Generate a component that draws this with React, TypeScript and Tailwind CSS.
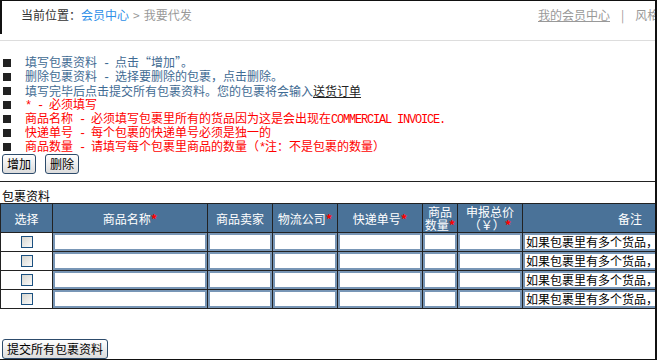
import React from "react";

const F = { fontFamily: '"Noto Sans CJK SC", "Noto Sans", sans-serif' };

function H({ children }: { children: React.ReactNode }) {
  return (
    <span className="whitespace-pre tracking-[-1.2px]" style={{ fontFamily: '"Liberation Mono", monospace' }}>
      {children}
    </span>
  );
}

function Li({ red, children }: { red?: boolean; children: React.ReactNode }) {
  return (
    <div className="flex items-center h-[14px] shrink-0">
      <span className="ml-[3px] w-[8px] h-[8px] bg-[#222] shrink-0" />
      <span className={`ml-[14px] whitespace-nowrap text-[12px] leading-[14px] ${red ? "text-[#ff0000]" : "text-[#3f6b93]"}`}>
        {children}
      </span>
    </div>
  );
}

function Btn({ children }: { children: React.ReactNode }) {
  return (
    <button className="h-[20px] px-[4px] text-[12px] leading-[16px] text-black border border-[#2d4b6b] rounded-[3px] bg-gradient-to-b from-white to-[#dcdcdc] whitespace-nowrap">
      {children}
    </button>
  );
}

const Star = () => <span className="text-[#ff0000] text-[13px] font-bold">*</span>;

function Th({ children }: { children: React.ReactNode }) {
  return (
    <div className="bg-[#4a7298] text-white text-[12px] leading-[13px] flex items-center justify-center text-center whitespace-nowrap">
      <div>{children}</div>
    </div>
  );
}

export default function App() {
  const rows = [0, 1, 2, 3];
  return (
    <div className="w-[657px] h-[360px] overflow-hidden bg-white" style={F}>
      <div className="w-[657px] h-[360px] border-t border-r-2 border-b border-[#111] flex flex-col overflow-hidden">
        {/* header */}
        <div className="h-[40px] shrink-0 border-b border-[#dddddd] flex items-start overflow-hidden">
          <div className="w-[538px] shrink-0 h-[33px] border-l-2 border-[#111] pl-[19px] pt-[7px] text-[12px] leading-[14px] whitespace-nowrap">
            <span className="text-[#333]">当前位置：</span>
            <span className="text-[#2e8fe8]">会员中心</span>
            <span className="text-[#999] mx-[4px]">&gt;</span>
            <span className="text-[#999]">我要代发</span>
          </div>
          <div className="shrink-0 pt-[7px] text-[12px] leading-[14px] whitespace-nowrap text-[#999]">
            <span className="underline">我的会员中心</span>
            <span className="mx-[11px]">|</span>
            <span>风格切换</span>
          </div>
        </div>

        {/* list */}
        <div className="mt-[15px] flex flex-col shrink-0">
          <Li>填写包裹资料<H>{" - "}</H>点击“增加”。</Li>
          <Li>删除包裹资料<H>{" - "}</H>选择要删除的包裹，点击删除。</Li>
          <Li>
            填写完毕后点击提交所有包裹资料。您的包裹将会输入<span className="underline text-[#222]">送货订单</span>
          </Li>
          <Li red>
            <H>{"* - "}</H>必须填写
          </Li>
          <Li red>
            商品名称<H>{" - "}</H>必须填写包裹里所有的货品因为这是会出现在<H>COMMERCIAL INVOICE.</H>
          </Li>
          <Li red>快递单号<H>{" - "}</H>每个包裹的快递单号必须是独一的</Li>
          <Li red>商品数量<H>{" - "}</H>请填写每个包裹里商品的数量（<H>*</H>注：不是包裹的数量）</Li>
        </div>

        <div className="flex gap-[9px] ml-[2px] h-[20px] shrink-0">
          <Btn>增加</Btn>
          <Btn>删除</Btn>
        </div>

        <div className="mt-[7px] h-[1px] bg-[#222] shrink-0" />

        <div className="h-[21px] shrink-0 pl-[2px] pt-[7px] text-[12px] leading-[13px] text-black">包裹资料</div>

        <div className="overflow-hidden shrink-0">
          <div className="w-[742px] grid grid-cols-[51px_154px_64px_64px_84px_34px_64px_214px] grid-rows-[28px_18px_18px_18px_18px] gap-[1px] bg-[#222] border border-[#222]">
            <Th>选择</Th>
            <Th>商品名称<Star /></Th>
            <Th>商品卖家</Th>
            <Th>物流公司<Star /></Th>
            <Th>快递单号<Star /></Th>
            <Th>
              商品
              <br />
              数量<Star />
            </Th>
            <Th>
              申报总价
              <br />（￥）<Star />
            </Th>
            <Th>备注</Th>
            {rows.map((r) => (
              <React.Fragment key={r}>
                <div className="bg-white flex justify-center items-center">
                  <span className="w-[12px] h-[12px] border border-[#1c5180] bg-gradient-to-br from-[#d6d6d0] to-[#fbfbfb]" />
                </div>
                {[1, 2, 3, 4, 5, 6].map((c) => (
                  <div key={c} className="bg-white border-2 border-[#7896b6]" />
                ))}
                <div className="bg-white border-2 border-[#7896b6] pl-[1px] text-[12px] leading-[14px] text-black whitespace-nowrap overflow-hidden">
                  如果包裹里有多个货品，请分别填写
                </div>
              </React.Fragment>
            ))}
          </div>
        </div>

        <div className="mt-[30px] ml-[2px] shrink-0 flex h-[20px]">
          <Btn>提交所有包裹资料</Btn>
        </div>
      </div>
    </div>
  );
}
